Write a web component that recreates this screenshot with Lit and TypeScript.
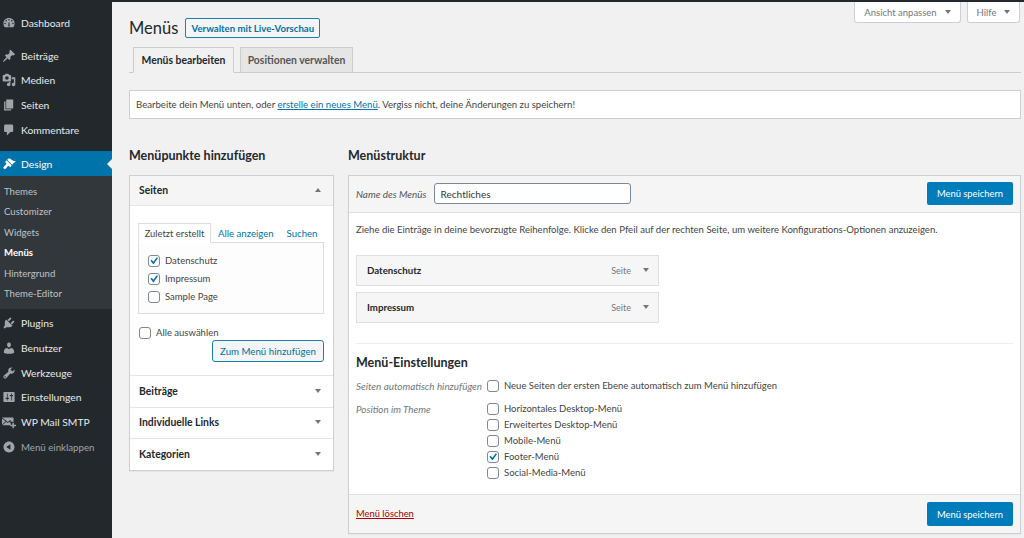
import { LitElement, html, css, svg } from "lit";
import { customElement } from "lit/decorators.js";

const ICONS: Record<string, any> = {
  dashboard: svg`<path fill-rule="evenodd" d="M3.76 16h12.48C17.34 14.57 18 12.790 18 10.860 18 6.190 14.420 3 10 3S2 6.190 2 10.860c0 1.930.66 3.710 1.760 5.140zM10 4.200a1.100 1.100 0 110 2.200 1.100 1.100 0 010-2.200zM6 5.700a1.100 1.100 0 110 2.200 1.100 1.100 0 010-2.200zm8 0a1.100 1.100 0 110 2.200 1.100 1.100 0 010-2.200zM4.300 9.600a1.100 1.100 0 110 2.200 1.100 1.100 0 010-2.200zm11.400 0a1.100 1.100 0 110 2.200 1.100 1.100 0 010-2.200zM9 15l.4-6h1.200l.4 6z"/>`,
  post: svg`<path d="M10.440 3.020l1.820-1.820 6.360 6.350-1.830 1.820c-1.050-.68-2.480-.57-3.410.36l-.75.75c-.92.93-1.040 2.350-.35 3.410l-1.830 1.820-2.410-2.410-2.800 2.790c-.42.42-3.380 2.710-3.800 2.290s1.860-3.390 2.280-3.810l2.790-2.790L4.100 9.360l1.830-1.820c1.050.69 2.480.57 3.400-.36l.75-.75c.93-.92 1.050-2.350.36-3.410z"/>`,
  media: svg`<path d="M13 11V4c0-.55-.45-1-1-1h-1.670L9 1H5L3.670 3H2c-.55 0-1 .45-1 1v7c0 .55.45 1 1 1h10c.55 0 1-.45 1-1zM7 4.500c1.380 0 2.500 1.120 2.500 2.500S8.380 9.500 7 9.500 4.500 8.380 4.500 7 5.620 4.500 7 4.500zM14 6h5v10.500c0 1.380-1.120 2.500-2.500 2.500S14 17.880 14 16.500s1.120-2.500 2.500-2.500c.17 0 .34.020.5.050V9h-3V6zm-4 8.050V13h2v3.500c0 1.380-1.120 2.500-2.500 2.500S7 17.880 7 16.500 8.120 14 9.500 14c.17 0 .34.020.5.050z"/>`,
  page: svg`<path d="M6 15V2h10v13H6zm-1 1h8v2H3V5h2v11z"/>`,
  comments: svg`<path d="M5 2h9c1.100 0 2 .9 2 2v7c0 1.100-.9 2-2 2h-2l-5 5v-5H5c-1.100 0-2-.9-2-2V4c0-1.100.9-2 2-2z"/>`,
  appearance: svg`<path d="M14.480 11.060L7.410 3.990l1.500-1.500c.5-.56 2.300-.47 3.510.32 1.210.8 1.430 1.280 2.910 2.100 1.180.64 2.450 1.260 4.450.85zm-.71.71L6.700 4.700 4.930 6.470c-.39.39-.39 1.020 0 1.410l1.060 1.060c.39.39.39 1.030 0 1.420-.6.6-1.430 1.270-2.210 1.980-.97.9-1.790 1.790-1.790 2.800s.8 1.860 1.800 1.860c1.020 0 1.880-.83 2.780-1.800.72-.78 1.400-1.600 2-2.200.38-.39 1.020-.39 1.410 0l1.060 1.060c.39.39 1.020.39 1.410 0z"/>`,
  plugins: svg`<path d="M13.110 4.360L9.870 7.600 8 5.730l3.240-3.240c.35-.34 1.050-.2 1.560.32.52.51.66 1.210.31 1.550zm-8 1.770l.91-1.120 9.010 9.010-1.190.84c-.71.71-2.630 1.160-3.820 1.160H6.140L4.900 17.260c-.59.59-1.540.59-2.120 0-.59-.58-.59-1.530 0-2.120l1.240-1.240v-3.880c0-1.130.4-3.190 1.090-3.890zm7.260 3.970l3.240-3.240c.34-.35 1.040-.21 1.550.31.52.51.66 1.210.31 1.550l-3.240 3.250z"/>`,
  users: svg`<path d="M10 9.250c-2.270 0-2.730-3.440-2.730-3.440C7 4.020 7.820 2 9.970 2c2.160 0 2.980 2.020 2.710 3.810 0 0-.41 3.440-2.680 3.440zm0 2.570L12.720 10c2.390 0 4.520 2.330 4.520 4.530v2.490s-3.650 1.130-7.240 1.130c-3.650 0-7.240-1.130-7.240-1.130v-2.490c0-2.250 1.940-4.480 4.570-4.480z"/>`,
  tools: svg`<path d="M16.680 9.770c-1.340 1.340-3.300 1.670-4.950.99l-5.410 6.520c-.99.99-2.590.99-3.580 0s-.99-2.590 0-3.570l6.520-5.420c-.68-1.650-.35-3.610.99-4.950 1.280-1.280 3.120-1.620 4.720-1.060l-2.890 2.890 2.820 2.820 2.860-2.870c.53 1.580.18 3.400-1.080 4.650zM3.810 16.210c.4.39 1.040.39 1.430 0 .4-.4.4-1.040 0-1.430-.39-.4-1.030-.4-1.430 0-.39.39-.39 1.030 0 1.430z"/>`,
  settings: svg`<path d="M18 16V4c0-.55-.45-1-1-1H3c-.55 0-1 .45-1 1v12c0 .55.45 1 1 1h14c.55 0 1-.45 1-1zM8 11h1c.55 0 1 .45 1 1s-.45 1-1 1H8v1.500c0 .28-.22.5-.5.5s-.5-.22-.5-.5V13H6c-.55 0-1-.45-1-1s.45-1 1-1h1V5.500c0-.28.22-.5.5-.5s.5.22.5.5V11zm5-2h-1c-.55 0-1-.45-1-1s.45-1 1-1h1V5.500c0-.28.22-.5.5-.5s.5.22.5.5V7h1c.55 0 1 .45 1 1s-.45 1-1 1h-1v5.500c0 .28-.22.5-.5.5s-.5-.22-.5-.5V9z"/>`,
  mail: svg`<path d="M0 3.500h16.500L8.300 10zM0 5l5 4-5 5zm6 4.800l2.300 1.800 2.300-1.800 2 2V14.500H.6zM14 5.300l2.500-1.500v6h-2.600L11.600 8.800zM15 11h2v3h3v2h-3v3h-2v-3h-3v-2h3z"/>`,
  collapse: svg`<path fill-rule="evenodd" d="M10 2.160c4.330 0 7.840 3.510 7.840 7.840s-3.510 7.840-7.840 7.840S2.160 14.330 2.160 10 5.670 2.160 10 2.160zM12 14V6l-6 4z"/>`,
};

const icon = (n: string) => html`<svg class="mi" viewBox="0 0 20 20">${ICONS[n]}</svg>`;
const item = (n: string, label: string, cls = "") =>
  html`<div class="item ${cls}">${icon(n)}<span>${label}</span></div>`;
const cb = (checked = false) => html`<span class="cb">${checked
  ? html`<svg viewBox="0 0 14 14"><path d="M2.800 6.800l1.500-1.300 2 2.300 3.900-5.300 1.500 1.100-5.300 7.400z"/></svg>`
  : ""}</span>`;
const check = (label: string, checked = false) =>
  html`<label class="chk">${cb(checked)}<span>${label}</span></label>`;
const down = html`<i class="down"></i>`;

@customElement("app-root")
export class AppRoot extends LitElement {
  static styles = css`
    :host {
      display: flex;
      height: 538px;
      width: 1024px;
      overflow: hidden;
      background: #f1f1f1;
      font-family: "Lato", "Open Sans", sans-serif;
      font-size: 9.6px;
      color: #444;
      box-sizing: border-box;
    }
    * { box-sizing: border-box; }
    .side {
      width: 112px;
      flex: none;
      background: #23282d;
      color: #e6e8ea;
      display: flex;
      flex-direction: column;
      padding-top: 10.400px;
    }
    .mi { width: 14px; height: 14px; fill: #a0a5aa; flex: none; }
    .item {
      height: 24.800px;
      display: flex;
      align-items: center;
      gap: 5px;
      padding-left: 2px;
      font-size: 10.300px;
      white-space: nowrap;
    }
    .item.first { margin-bottom: 8px; }
    .item.active {
      background: #0073aa;
      color: #fff;
      margin-top: 8.900px;
      position: relative;
    }
    .item.active .mi { fill: #fff; }
    .item.active::after {
      content: "";
      position: absolute;
      right: 0;
      top: 8px;
      border: 5px solid transparent;
      border-right-color: #f1f1f1;
      border-left: 0;
    }
    .item.dim { color: #a0a5aa; font-size: 9.700px; }
    .sub {
      background: #32373c;
      padding: 5px 0 5px 4px;
      margin-bottom: 1.500px;
      font-size: 9.600px;
      color: #bfc3c7;
    }
    .sub div { height: 20.500px; display: flex; align-items: center; }
    .sub .cur { color: #fff; font-weight: 700; }

    .main {
      flex: 1;
      min-width: 0;
      border-top: 2px solid #23282d;
      padding: 0 3px 0 17px;
      display: flex;
      flex-direction: column;
    }
    .meta {
      height: 0;
      display: flex;
      justify-content: flex-end;
      gap: 6px;
      padding-right: 1px;
    }
    .meta div {
      height: 21px;
      background: #fff;
      border: 1px solid #ccd0d4;
      border-top: 0;
      border-radius: 0 0 3px 3px;
      display: flex;
      align-items: center;
      justify-content: center;
      gap: 8px;
      color: #72777c;
      font-size: 9.500px;
    }
    .meta .a { width: 107px; }
    .meta .b { width: 53px; }
    .down {
      display: inline-block;
      border-style: solid;
      border-width: 4.500px 3px 0;
      border-color: #72777c transparent transparent;
    }
    .head {
      display: flex;
      align-items: center;
      gap: 7px;
      height: 20px;
      margin-top: 16px;
    }
    h1 {
      font-size: 16.500px;
      font-weight: 400;
      color: #23282d;
      margin: 0;
      line-height: 20px;
    }
    .live {
      height: 20px;
      width: 135px;
      border: 1px solid #1b80ad;
      background: #f3f5f6;
      border-radius: 2px;
      color: #0071a1;
      font-size: 9.600px;
      font-weight: 700;
      white-space: nowrap;
      display: flex;
      align-items: center;
      justify-content: center;
    }
    .tabs {
      display: flex;
      gap: 6px;
      padding-left: 4px;
      margin-top: 9px;
      height: 26px;
      border-bottom: 1px solid #ccc;
    }
    .tabs div {
      height: 26px;
      border: 1px solid #ccc;
      background: #e5e5e5;
      color: #555;
      font-weight: 700;
      font-size: 10.400px;
      display: flex;
      align-items: center;
      justify-content: center;
    }
    .tabs .t1 { width: 101px; background: #f1f1f1; border-bottom-color: #f1f1f1; color: #23282d; }
    .tabs .t2 { width: 113px; }
    .notice {
      margin-top: 17px;
      height: 29px;
      background: #fff;
      border: 1px solid #ccd0d4;
      display: flex;
      align-items: center;
      padding-left: 6px;
      font-size: 9.600px;
      white-space: nowrap;
    }
    a { color: #0073aa; text-decoration: underline; }
    .cols {
      margin-top: 27px;
      display: flex;
      gap: 14px;
      align-items: flex-start;
    }
    h2 {
      font-size: 12.500px;
      line-height: 20px;
      font-weight: 700;
      color: #23282d;
      margin: 0;
    }
    .left { width: 205px; flex: none; }
    .right { flex: 1; min-width: 0; }
    .box {
      margin-top: 9px;
      background: #fff;
      border: 1px solid #ccd0d4;
      box-shadow: 0 1px 1px rgba(0,0,0,.04);
    }
    .acc {
      height: 31.500px;
      border-top: 1px solid #e5e5e5;
      padding: 0 12px 1px 9px;
      display: flex;
      align-items: center;
      justify-content: space-between;
      font-weight: 700;
      font-size: 10.400px;
      color: #23282d;
    }
    .acc.open {
      border-top: 0;
      height: 30px;
      background: #f5f5f5;
      border-bottom: 1px solid #e5e5e5;
    }
    .up {
      display: inline-block;
      border-style: solid;
      border-width: 0 3px 4.500px;
      border-color: transparent transparent #72777c;
    }
    .acc-body {
      padding: 17px 9px 0 8px;
      height: 169px;
    }
    .itabs { display: flex; align-items: flex-end; height: 19px; white-space: nowrap; }
    .itabs span { color: #0073aa; font-size: 9.600px; }
    .itabs .on {
      color: #444;
      width: 73px;
      height: 20px;
      border: 1px solid #ddd;
      border-bottom: 1px solid #fff;
      background: #fff;
      font-size: 9.400px;
      display: flex;
      align-items: center;
      justify-content: center;
      margin-bottom: -1px;
      position: relative;
    }
    .itabs .l1 { margin-left: 7px; padding-bottom: 3px; }
    .itabs .l2 { margin-left: 13px; padding-bottom: 3px; }
    .ibox {
      border: 1px solid #ddd;
      height: 72px;
      padding: 12px 9px;
      display: flex;
      flex-direction: column;
      gap: 6px;
      background: #fdfdfd;
    }
    .cb {
      width: 12px;
      height: 12px;
      border: 1px solid #7e8993;
      border-radius: 3px;
      background: #fff;
      flex: none;
      display: inline-flex;
    }
    .cb svg { width: 12px; height: 12px; margin: -1px 0 0 -1px; fill: #0073aa; flex: none; overflow: visible; }
    .chk { display: flex; align-items: center; gap: 5px; height: 11.800px; font-size: 9.500px; white-space: nowrap; }
    .selall { margin: 13px 0 0 1px; }
    .addrow { display: flex; justify-content: flex-end; margin-top: 1px; }
    .add {
      width: 112px;
      height: 22px;
      border: 1px solid #1b80ad;
      border-radius: 3px;
      background: #f3f5f6;
      color: #0071a1;
      font-size: 9.700px;
      white-space: nowrap;
      display: flex;
      align-items: center;
      justify-content: center;
    }
    .rhead {
      height: 37px;
      background: #f5f5f5;
      border-bottom: 1px solid #dfdfdf;
      display: flex;
      align-items: center;
      padding: 0 7px 1px 7px;
      justify-content: space-between;
    }
    .rhead .nm { display: flex; align-items: center; gap: 8px; }
    em { font-style: italic; font-size: 9.900px; color: #555; white-space: nowrap; }
    .input {
      width: 197px;
      height: 21px;
      border: 1px solid #7e8993;
      border-radius: 3px;
      background: #fff;
      padding-left: 5px;
      font-size: 10.100px;
      color: #32373c;
      display: flex;
      align-items: center;
    }
    .primary {
      width: 86px;
      height: 23px;
      background: #007cba;
      border-radius: 2px;
      color: #fff;
      font-size: 9.400px;
      white-space: nowrap;
      display: flex;
      align-items: center;
      justify-content: center;
    }
    .rbody { padding: 0 7px; height: 281px; }
    .hint { padding-top: 11px; height: 42px; font-size: 9.570px; white-space: nowrap; }
    .mitem {
      width: 303px;
      height: 31px;
      background: #f6f6f6;
      border: 1px solid #dfdfdf;
      margin-bottom: 6px;
      display: flex;
      align-items: center;
      padding: 0 9px 1px 10px;
      font-weight: 700;
      font-size: 9.700px;
      color: #23282d;
    }
    .mitem .k { margin-left: auto; font-weight: 400; font-size: 9px; color: #72777c; margin-right: 12px; }
    .sep { border-top: 1px solid #eee; margin-top: 20px; padding-top: 10px; }
    .sep h3 { margin: 0; font-size: 12.500px; line-height: 18px; font-weight: 700; color: #23282d; }
    .set { display: grid; grid-template-columns: 131px 1fr; margin-top: 8px; color: #72777c; }
    .set em { color: #72777c; }
    .set .col { display: flex; flex-direction: column; gap: 4.200px; color: #444; }
    .set + .set { margin-top: 11px; }
    .rfoot {
      height: 39px;
      background: #f5f5f5;
      border-top: 1px solid #dfdfdf;
      display: flex;
      align-items: center;
      justify-content: space-between;
      padding: 0 7px;
    }
    .rfoot .primary { height: 24px; }
    .del { color: #a00; font-size: 9.400px; padding-bottom: 2px; }
  `;

  render() {
    return html`
      <nav class="side">
        ${item("dashboard", "Dashboard", "first")}
        ${item("post", "Beiträge")}
        ${item("media", "Medien")}
        ${item("page", "Seiten")}
        ${item("comments", "Kommentare")}
        ${item("appearance", "Design", "active")}
        <div class="sub">
          <div>Themes</div><div>Customizer</div><div>Widgets</div>
          <div class="cur">Menüs</div><div>Hintergrund</div><div>Theme-Editor</div>
        </div>
        ${item("plugins", "Plugins")}
        ${item("users", "Benutzer")}
        ${item("tools", "Werkzeuge")}
        ${item("settings", "Einstellungen")}
        ${item("mail", "WP Mail SMTP")}
        ${item("collapse", "Menü einklappen", "dim")}
      </nav>
      <main class="main">
        <div class="meta">
          <div class="a">Ansicht anpassen ${down}</div>
          <div class="b">Hilfe ${down}</div>
        </div>
        <div class="head"><h1>Menüs</h1><div class="live">Verwalten mit Live-Vorschau</div></div>
        <div class="tabs"><div class="t1">Menüs bearbeiten</div><div class="t2">Positionen verwalten</div></div>
        <div class="notice"><span>Bearbeite dein Menü unten, oder <a>erstelle ein neues Menü</a>. Vergiss nicht, deine Änderungen zu speichern!</span></div>
        <div class="cols">
          <section class="left">
            <h2>Menüpunkte hinzufügen</h2>
            <div class="box">
              <div class="acc open"><span>Seiten</span><i class="up"></i></div>
              <div class="acc-body">
                <div class="itabs"><span class="on">Zuletzt erstellt</span><span class="l1">Alle anzeigen</span><span class="l2">Suchen</span></div>
                <div class="ibox">
                  ${check("Datenschutz", true)}
                  ${check("Impressum", true)}
                  ${check("Sample Page")}
                </div>
                <div class="chk selall">${cb()}<span>Alle auswählen</span></div>
                <div class="addrow"><div class="add">Zum Menü hinzufügen</div></div>
              </div>
              <div class="acc"><span>Beiträge</span>${down}</div>
              <div class="acc"><span>Individuelle Links</span>${down}</div>
              <div class="acc"><span>Kategorien</span>${down}</div>
            </div>
          </section>
          <section class="right">
            <h2>Menüstruktur</h2>
            <div class="box">
              <div class="rhead">
                <div class="nm"><em>Name des Menüs</em><div class="input">Rechtliches</div></div>
                <div class="primary">Menü speichern</div>
              </div>
              <div class="rbody">
                <div class="hint">Ziehe die Einträge in deine bevorzugte Reihenfolge. Klicke den Pfeil auf der rechten Seite, um weitere Konfigurations-Optionen anzuzeigen.</div>
                <div class="mitem">Datenschutz<span class="k">Seite</span>${down}</div>
                <div class="mitem">Impressum<span class="k">Seite</span>${down}</div>
                <div class="sep">
                  <h3>Menü-Einstellungen</h3>
                  <div class="set"><em>Seiten automatisch hinzufügen</em><div class="col">${check("Neue Seiten der ersten Ebene automatisch zum Menü hinzufügen")}</div></div>
                  <div class="set"><em>Position im Theme</em><div class="col">
                    ${check("Horizontales Desktop-Menü")}
                    ${check("Erweitertes Desktop-Menü")}
                    ${check("Mobile-Menü")}
                    ${check("Footer-Menü", true)}
                    ${check("Social-Media-Menü")}
                  </div></div>
                </div>
              </div>
              <div class="rfoot"><a class="del">Menü löschen</a><div class="primary">Menü speichern</div></div>
            </div>
          </section>
        </div>
      </main>
    `;
  }
}
